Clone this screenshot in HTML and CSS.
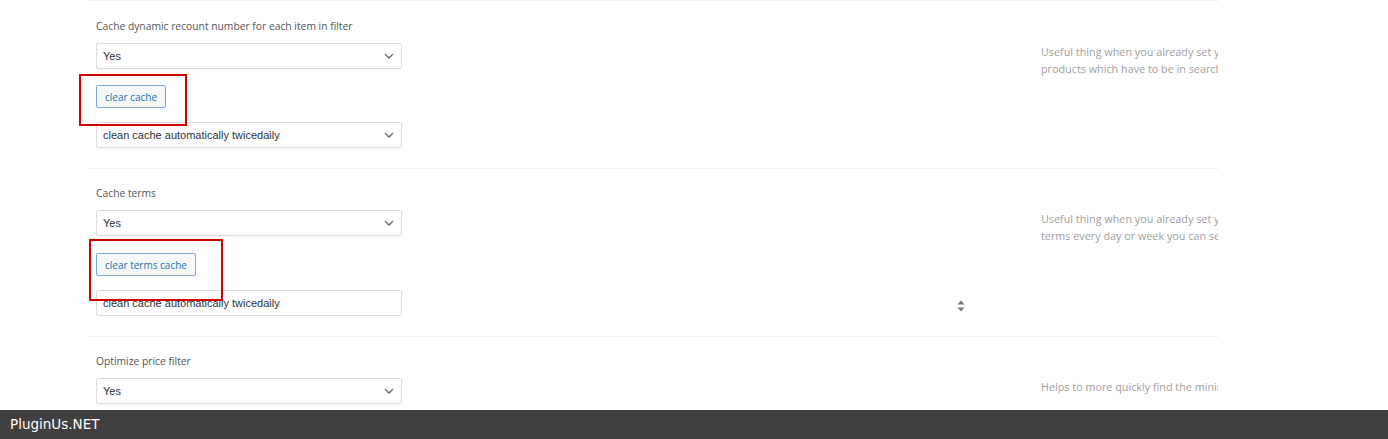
FILE: index.html
```html
<!DOCTYPE html>
<html lang="en">
<head>
    <meta charset="UTF-8">
    <meta name="viewport" content="width=device-width, initial-scale=1.0">
    <title>Cache options</title>
    <link rel="stylesheet" href="styles.css">
</head>
<body>
    <div class="options">
        <div class="option-row">
            <div class="option-main">
                <div class="option-label">Cache dynamic recount number for each item in filter</div>
                <div class="select-box">
                    <span>Yes</span>
                    <svg class="chevron" width="10" height="6" viewBox="0 0 10 6"><path d="M1 1l4 4 4-4" fill="none" stroke="#666" stroke-width="1.3"/></svg>
                </div>
                <button class="cache-button">clear cache</button>
                <div class="select-box">
                    <span>clean cache automatically twicedaily</span>
                    <svg class="chevron" width="10" height="6" viewBox="0 0 10 6"><path d="M1 1l4 4 4-4" fill="none" stroke="#666" stroke-width="1.3"/></svg>
                </div>
            </div>
            <div class="option-desc">
                <div class="desc-text">Useful thing when you already set your filter settings and all<br>products which have to be in search results are rarely changed</div>
            </div>
            <div class="mark mark-one"></div>
        </div>

        <div class="option-row">
            <div class="option-main">
                <div class="option-label">Cache terms</div>
                <div class="select-box">
                    <span>Yes</span>
                    <svg class="chevron" width="10" height="6" viewBox="0 0 10 6"><path d="M1 1l4 4 4-4" fill="none" stroke="#666" stroke-width="1.3"/></svg>
                </div>
                <button class="cache-button terms-button">clear terms cache</button>
                <div class="input-line">
                    <div class="text-box">clean cache automatically twicedaily</div>
                    <svg class="spinner" width="8" height="12" viewBox="0 0 8 12"><path d="M4 0.5L7.5 4.5H0.5Z M4 11.5L7.5 7.5H0.5Z" fill="#777"/></svg>
                </div>
            </div>
            <div class="option-desc">
                <div class="desc-text">Useful thing when you already set your filter and you add new<br>terms every day or week you can set cache clean periodically</div>
            </div>
            <div class="mark mark-two"></div>
        </div>

        <div class="option-row">
            <div class="option-main">
                <div class="option-label">Optimize price filter</div>
                <div class="select-box">
                    <span>Yes</span>
                    <svg class="chevron" width="10" height="6" viewBox="0 0 10 6"><path d="M1 1l4 4 4-4" fill="none" stroke="#666" stroke-width="1.3"/></svg>
                </div>
            </div>
            <div class="option-desc">
                <div class="desc-text">Helps to more quickly find the minimum and maximum prices</div>
            </div>
        </div>
    </div>

    <div class="footer">PluginUs.NET</div>
</body>
</html>
```

FILE: styles.css
```css
body {
    margin: 0;
    padding: 0;
    background: #fff;
    font-family: "Open Sans", Arial, sans-serif;
    overflow: hidden;
}
.options {
    margin-left: 88px;
    margin-top: 1px;
    width: 1130px;
}
.option-row {
    position: relative;
    display: grid;
    grid-template-columns: 953px 177px;
    border-top: 1px solid #eef0f2;
    padding: 16px 0 20px 0;
}
.option-row:first-child {
    margin-top: -1px;
    padding-top: 17px;
}
.option-main {
    padding-left: 8px;
}
.option-label {
    font-size: 10.3px;
    line-height: 16px;
    color: #555;
    margin-bottom: 9px;
}
.select-box {
    box-sizing: border-box;
    width: 306px;
    height: 26px;
    border: 1px solid #dcdcde;
    border-radius: 2px;
    display: flex;
    align-items: center;
    justify-content: space-between;
    padding: 0 7px 0 6px;
    font-family: "Liberation Sans", Arial, sans-serif;
    font-size: 11px;
    color: #2c3338;
    box-shadow: 0 1px 1px rgba(0, 0, 0, 0.03);
}
.cache-button {
    display: block;
    box-sizing: border-box;
    margin: 16px 0 14px 0;
    height: 23px;
    padding: 0 8px;
    background: #f6f7f7;
    border: 1px solid #7fa9d8;
    border-radius: 2px;
    color: #2271b1;
    font-family: "Open Sans", Arial, sans-serif;
    font-size: 10px;
    cursor: pointer;
}
.terms-button {
    margin-top: 17px;
}
.input-line {
    display: flex;
    align-items: center;
    justify-content: space-between;
    width: 869px;
}
.text-box {
    box-sizing: border-box;
    width: 306px;
    height: 26px;
    line-height: 24px;
    border: 1px solid #dcdcde;
    border-radius: 2px;
    padding: 0 6px;
    font-family: "Liberation Sans", Arial, sans-serif;
    font-size: 11px;
    color: #2c3338;
}
.spinner {
    margin-top: 6px;
}
.option-desc {
    padding-top: 25px;
    overflow: hidden;
}
.desc-text {
    width: 420px;
    white-space: nowrap;
    font-size: 10.8px;
    line-height: 17px;
    color: #a0a0a0;
}
.mark {
    position: absolute;
    border: 2px solid #d40000;
    box-sizing: border-box;
}
.mark-one {
    left: -9px;
    top: 73px;
    width: 108px;
    height: 52px;
}
.mark-two {
    left: 1px;
    top: 70px;
    width: 134px;
    height: 62px;
}
.footer {
    position: fixed;
    left: 0;
    right: 0;
    bottom: 0;
    height: 29px;
    background: #404040;
    color: #fff;
    font-family: "DejaVu Sans", Verdana, sans-serif;
    font-size: 13.5px;
    line-height: 29px;
    padding-left: 10px;
}
```
